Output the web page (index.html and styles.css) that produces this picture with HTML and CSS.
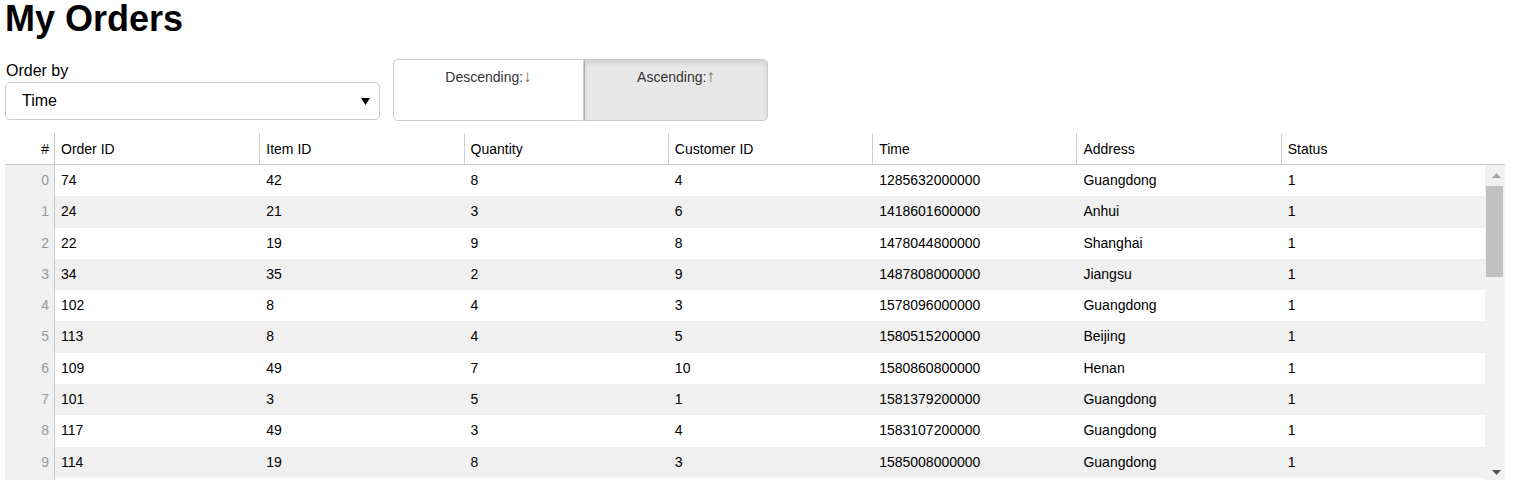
FILE: index.html
```html
<!DOCTYPE html>
<html>
<head>
<meta charset="utf-8">
<title>My Orders</title>
<link rel="stylesheet" href="styles.css">
</head>
<body>
<div class="page">
  <h1 class="title">My Orders</h1>
  <div class="controls">
    <div class="field">
      <div class="label">Order by</div>
      <div class="select">
        <span>Time</span>
        <svg class="caret" width="9" height="7" viewBox="0 0 9 7"><polygon points="0,0 9,0 4.5,7" fill="#000"/></svg>
      </div>
    </div>
    <div class="btn-group">
      <div class="btn btn-desc">Descending:<span class="arrow">↓</span></div>
      <div class="btn btn-asc active">Ascending:<span class="arrow">↑</span></div>
    </div>
  </div>

  <div class="table">
    <div class="thead">
      <div class="i">#</div>
      <div class="c">Order ID</div>
      <div class="c">Item ID</div>
      <div class="c">Quantity</div>
      <div class="c">Customer ID</div>
      <div class="c">Time</div>
      <div class="c">Address</div>
      <div class="c">Status</div>
      <div class="sb-spacer"></div>
    </div>
    <div class="tbody">
      <div class="rows">
        <div class="row"><div class="i">0</div><div class="c">74</div><div class="c">42</div><div class="c">8</div><div class="c">4</div><div class="c">1285632000000</div><div class="c">Guangdong</div><div class="c">1</div></div>
        <div class="row"><div class="i">1</div><div class="c">24</div><div class="c">21</div><div class="c">3</div><div class="c">6</div><div class="c">1418601600000</div><div class="c">Anhui</div><div class="c">1</div></div>
        <div class="row"><div class="i">2</div><div class="c">22</div><div class="c">19</div><div class="c">9</div><div class="c">8</div><div class="c">1478044800000</div><div class="c">Shanghai</div><div class="c">1</div></div>
        <div class="row"><div class="i">3</div><div class="c">34</div><div class="c">35</div><div class="c">2</div><div class="c">9</div><div class="c">1487808000000</div><div class="c">Jiangsu</div><div class="c">1</div></div>
        <div class="row"><div class="i">4</div><div class="c">102</div><div class="c">8</div><div class="c">4</div><div class="c">3</div><div class="c">1578096000000</div><div class="c">Guangdong</div><div class="c">1</div></div>
        <div class="row"><div class="i">5</div><div class="c">113</div><div class="c">8</div><div class="c">4</div><div class="c">5</div><div class="c">1580515200000</div><div class="c">Beijing</div><div class="c">1</div></div>
        <div class="row"><div class="i">6</div><div class="c">109</div><div class="c">49</div><div class="c">7</div><div class="c">10</div><div class="c">1580860800000</div><div class="c">Henan</div><div class="c">1</div></div>
        <div class="row"><div class="i">7</div><div class="c">101</div><div class="c">3</div><div class="c">5</div><div class="c">1</div><div class="c">1581379200000</div><div class="c">Guangdong</div><div class="c">1</div></div>
        <div class="row"><div class="i">8</div><div class="c">117</div><div class="c">49</div><div class="c">3</div><div class="c">4</div><div class="c">1583107200000</div><div class="c">Guangdong</div><div class="c">1</div></div>
        <div class="row"><div class="i">9</div><div class="c">114</div><div class="c">19</div><div class="c">8</div><div class="c">3</div><div class="c">1585008000000</div><div class="c">Guangdong</div><div class="c">1</div></div>
      </div>
      <div class="scrollbar">
        <div class="sb-btn sb-up"><svg width="9" height="5" viewBox="0 0 9 5"><polygon points="4.5,0 9,5 0,5" fill="#a3a3a3"/></svg></div>
        <div class="sb-thumb"></div>
        <div class="sb-track"></div>
        <div class="sb-btn sb-down"><svg width="9" height="5" viewBox="0 0 9 5"><polygon points="0,0 9,0 4.5,5" fill="#505050"/></svg></div>
      </div>
    </div>
  </div>
</div>
</body>
</html>
```

FILE: styles.css
```css
html, body {
  margin: 0;
  padding: 0;
  overflow: hidden;
  background: #fff;
}

body {
  font-family: "Liberation Sans", Arial, sans-serif;
  color: #000;
}

.page {
  width: 1500px;
  padding: 0 10px 0 5px;
}

.title {
  margin: 0;
  font-size: 36px;
  font-weight: bold;
  line-height: 38px;
}

.controls {
  display: flex;
  gap: 13px;
  margin-top: 21px;
  align-items: flex-start;
}

.field {
  width: 375px;
  display: flex;
  flex-direction: column;
}

.label {
  font-size: 16px;
  line-height: 18px;
  padding-top: 3px;
  margin-bottom: 2px;
  padding-left: 1px;
}

.select {
  height: 38px;
  box-sizing: border-box;
  border: 1px solid #cccccc;
  border-radius: 5px;
  display: flex;
  align-items: center;
  justify-content: space-between;
  padding: 0 9px 0 16px;
  font-size: 16px;
}

.caret {
  display: block;
}

.btn-group {
  display: flex;
  height: 62px;
}

.btn {
  box-sizing: border-box;
  height: 62px;
  font-size: 14px;
  line-height: 19px;
  padding-top: 8px;
  text-align: center;
  color: #333;
  border: 1px solid #cccccc;
}

.arrow {
  font-size: 17px;
  line-height: 1;
  color: #7a6450;
}

.btn-desc {
  width: 191px;
  background: #fff;
  border-radius: 5px 0 0 5px;
}

.btn-asc {
  width: 184px;
  border-left: 1px solid #adadad;
  border-radius: 0 5px 5px 0;
  background: #e8e8e8;
  box-shadow: inset 0 3px 5px rgba(0, 0, 0, 0.1);
}

.table {
  margin-top: 12px;
  font-size: 14px;
}

.thead,
.row {
  display: grid;
  grid-template-columns: 50px repeat(7, 1fr);
}

.thead {
  grid-template-columns: 50px repeat(7, 1fr) 20px;
  height: 31px;
  border-bottom: 1px solid #c8c8c8;
  line-height: 31px;
}

.thead .i,
.thead .c {
  padding-top: 1px;
  line-height: 30px;
}

.i {
  box-sizing: border-box;
  text-align: right;
  padding-right: 5px;
  border-right: 1px solid #c8c8c8;
}

.c {
  padding-left: 6px;
  white-space: nowrap;
  overflow: hidden;
}

.c + .c {
  border-left: 1px solid transparent;
}

.thead .c + .c {
  border-left-color: #d0d0d0;
}

.tbody {
  display: flex;
  height: 315px;
  overflow: hidden;
}

.rows {
  flex: 1;
}

.row {
  height: 31.3px;
  line-height: 31.3px;
}

.row:nth-child(even) {
  background: #f0f0f0;
}

.row .i {
  background: #f0f0f0;
  color: #999;
}

.rows::after {
  content: "";
  display: block;
  width: 50px;
  height: 10px;
  box-sizing: border-box;
  background: #f0f0f0;
  border-right: 1px solid #c8c8c8;
}

.scrollbar {
  width: 20px;
  background: #f1f1f1;
  display: flex;
  flex-direction: column;
}

.sb-btn {
  display: flex;
  align-items: center;
  justify-content: center;
}

.sb-up {
  height: 21px;
  padding-left: 2px;
}

.sb-down {
  height: 15px;
  padding-left: 2px;
}

.sb-btn svg {
  display: block;
}

.sb-thumb {
  height: 91px;
  margin: 0 2px 0 1px;
  background: #c1c1c1;
}

.sb-track {
  flex: 1;
}
```
